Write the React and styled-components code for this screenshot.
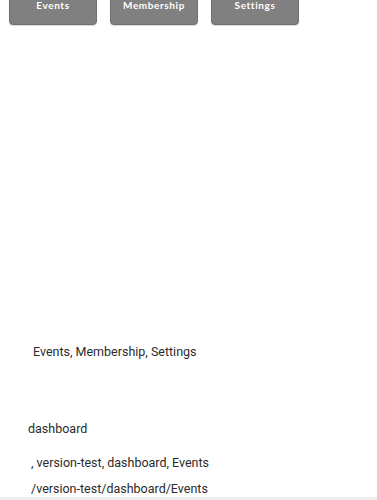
import styled, { createGlobalStyle } from 'styled-components';

const GlobalStyle = createGlobalStyle`
    html, body {
        margin: 0;
        padding: 0;
        background: #ffffff;
        overflow: hidden;
    }
`;

const Page = styled.div`
    width: 377px;
    height: 500px;
    display: flex;
    flex-direction: column;
    font-family: Roboto, 'Liberation Sans', sans-serif;
    color: #2b2b2b;
`;

const Tabs = styled.div`
    display: flex;
    gap: 13px;
    padding-left: 9px;
    margin-top: -10px;
`;

const TabButton = styled.button`
    width: 88px;
    height: 35px;
    padding: 0 0 13px;
    border: 1px solid #707070;
    border-radius: 4px;
    background: #808080;
    color: #ffffff;
    font-family: Lato, 'Open Sans', sans-serif;
    font-weight: 700;
    font-size: 10px;
    letter-spacing: 0.6px;
    display: flex;
    align-items: flex-end;
    justify-content: center;
    box-shadow: 0 1px 1px rgba(0, 0, 0, 0.15);
`;

const Line = styled.div`
    font-size: 12.5px;
    line-height: 16px;
    padding-left: ${(p) => p.$indent}px;
    margin-top: ${(p) => p.$top}px;
    white-space: pre;
`;

const Footer = styled.div`
    margin-top: auto;
    height: 3px;
    background: #eeeeee;
`;

const tabs = ['Events', 'Membership', 'Settings'];

const App = () => (
    <Page>
        <GlobalStyle />
        <Tabs>
            {tabs.map((t) => (
                <TabButton key={t}>{t}</TabButton>
            ))}
        </Tabs>
        <Line $indent={33} $top={319}>Events, Membership, Settings</Line>
        <Line $indent={28} $top={61}>dashboard</Line>
        <Line $indent={31} $top={18}>, version-test, dashboard, Events</Line>
        <Line $indent={31} $top={10}>/version-test/dashboard/Events</Line>
        <Footer />
    </Page>
);

export default App;
